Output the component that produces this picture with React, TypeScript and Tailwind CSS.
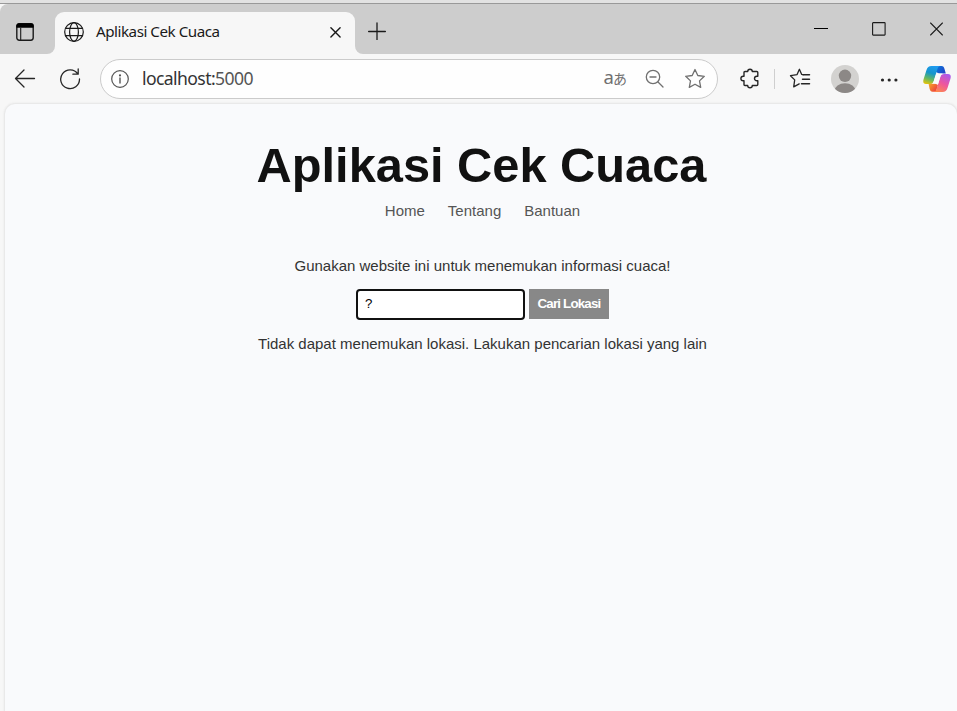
import React from "react";

const stroke = {
  fill: "none",
  stroke: "currentColor",
  strokeLinecap: "round" as const,
  strokeLinejoin: "round" as const,
};

function TitleBar() {
  return (
    <div className="flex h-[50px] rounded-tl-lg bg-[#cdcdcd] font-['Noto_Sans',sans-serif] text-[#1a1a1a]">
      <div className="flex w-[55px] bg-[#f7f7f7]">
        <div className="flex w-full items-center rounded-tl-lg rounded-br-lg bg-[#cdcdcd] pt-1.5 pl-4">
          <svg width="18" height="18" viewBox="0 0 18 18" {...stroke} strokeWidth="1.4">
            <rect x="0.8" y="0.8" width="16.4" height="16.4" rx="2.4" />
            <path d="M1 4V3.2Q1 1 3.2 1H14.8Q17 1 17 3.2V4Z" fill="#000" stroke="#000" />
            <path d="M4.7 5v12" strokeWidth="1.1" />
          </svg>
        </div>
      </div>
      <div className="mt-2 flex h-[42px] w-[300px] items-center rounded-t-[9px] bg-[#f7f7f7] pr-3 pb-[2px] pl-[9px]">
        <svg width="20" height="20" viewBox="0 0 20 20" {...stroke} strokeWidth="1.2">
          <circle cx="10" cy="10" r="9.3" />
          <ellipse cx="10" cy="10" rx="4.4" ry="9.3" />
          <path d="M1.7 6.3h16.6M1.7 13.7h16.6" />
        </svg>
        <span className="ml-3 flex-1 pb-[2px] text-[15.200px] leading-5 tracking-[-0.480px] whitespace-nowrap">Aplikasi Cek Cuaca</span>
        <svg width="15" height="14" viewBox="0 0 15 14" {...stroke} strokeWidth="1.4">
          <path d="M2.9 2.7l9.2 9.2M12.1 2.7L2.9 11.9" />
        </svg>
      </div>
      <div className="flex flex-1 bg-[#f7f7f7]">
        <div className="flex flex-1 items-start rounded-bl-lg bg-[#cdcdcd] pt-[18px] pl-[13px]">
          <svg width="18" height="18" viewBox="0 0 18 18" {...stroke} strokeWidth="1.3">
            <path d="M0.6 9.5h16.8M9 1v17" />
          </svg>
          <div className="mr-3.5 ml-auto flex">
            <svg width="14" height="16" viewBox="0 0 14 16" className="mr-11 text-black" fill="none" stroke="currentColor">
              <path d="M0 6.5h14" />
            </svg>
            <svg width="14" height="14" viewBox="0 0 14 14" className="mr-11" fill="none" stroke="currentColor" strokeWidth="1.1">
              <rect x="0.6" y="0.6" width="12.5" height="12.5" rx="0.6" />
            </svg>
            <svg width="13" height="14" viewBox="0 0 13 14" fill="none" stroke="currentColor" strokeWidth="1.1">
              <path d="M0.3 0.7l12.4 12.6M12.7 0.7L0.3 13.3" />
            </svg>
          </div>
        </div>
      </div>
    </div>
  );
}

function AddressBar() {
  return (
    <div className="flex h-10 w-[618px] items-center rounded-full border border-[#cbcbcb] bg-[#fefefe] pr-[11px] pl-2.5 text-[#707070]">
      <svg width="18" height="18" viewBox="0 0 18 18" {...stroke} strokeWidth="1.2" className="text-[#555]">
        <circle cx="9" cy="9" r="8.3" />
        <path d="M9 8v5" strokeWidth="1.4" />
        <circle cx="9" cy="5.4" r="0.5" fill="currentColor" />
      </svg>
      <span className="ml-[13px] flex-1 pb-0.5 font-['Noto_Sans',sans-serif] text-[17.600px] leading-6 tracking-[-0.600px] text-[#333]">
        localhost:<span className="text-[#555]">5000</span>
      </span>
      <span className="mr-[18px] flex items-baseline pb-0.5 leading-5">
        <span className="font-['Noto_Sans',sans-serif] text-[18.500px]">a</span>
        <span className="-ml-px font-['Noto_Sans_CJK_JP',sans-serif] text-[14px]">あ</span>
      </span>
      <svg width="20" height="20" viewBox="0 0 20 20" {...stroke} strokeWidth="1.3" className="mr-[19px]">
        <circle cx="8" cy="8" r="6.700" />
        <path d="M13 13l5 5M5 8h6" />
      </svg>
      <svg width="22" height="21" viewBox="0 0 22 21" {...stroke} strokeWidth="1.3">
        <path d="M11 1.500l2.800 6 6.500.8-4.800 4.600 1.200 6.500-5.700-3.200-5.700 3.200 1.200-6.500-4.800-4.600 6.500-.8z" />
      </svg>
    </div>
  );
}

function CopilotLogo() {
  return (
    <svg width="28" height="28" viewBox="0 0 28 28">
      <defs>
        <linearGradient id="left" x1="11" y1="1" x2="5" y2="20" gradientUnits="userSpaceOnUse">
          <stop stopColor="#1f9bf0" />
          <stop offset=".38" stopColor="#1595cb" />
          <stop offset=".68" stopColor="#61b765" />
          <stop offset="1" stopColor="#f2c500" />
        </linearGradient>
        <linearGradient id="right" x1="23" y1="8" x2="13" y2="27" gradientUnits="userSpaceOnUse">
          <stop stopColor="#a958ee" />
          <stop offset=".5" stopColor="#ee559e" />
          <stop offset="1" stopColor="#ff8d47" />
        </linearGradient>
        <linearGradient id="fold" x1="13" y1="2" x2="21" y2="8" gradientUnits="userSpaceOnUse">
          <stop stopColor="#087bd8" />
          <stop offset="1" stopColor="#2144c9" />
        </linearGradient>
        <linearGradient id="base" x1="4" y1="18" x2="13" y2="25" gradientUnits="userSpaceOnUse">
          <stop stopColor="#f8bc1d" />
          <stop offset="1" stopColor="#ee453e" />
        </linearGradient>
      </defs>
      <path d="M11 1h7.500c1.800 0 2.500 1.200 3 3l1.300 4.500H16L13 7z" fill="url(#fold)" />
      <path d="M5.500 18.500H12l3 1.500-2 6.700H9.500c-1.700 0-2.300-1.200-2.900-3z" fill="url(#base)" />
      <path d="M8.500 1H17c-1.600.3-2.200 1.800-2.700 3.500L10.700 16c-.8 2.300-1.800 3-4 3H3c-2.500 0-3.200-1.800-2.500-4.500L3.500 5c.8-2.500 2.300-4 5-4z" fill="url(#left)" />
      <path d="M19.500 27H11c1.600-.3 2.200-1.800 2.700-3.500L17.300 12c.8-2.300 1.800-3 4-3H25c2.500 0 3.200 1.800 2.500 4.500L24.500 23c-.8 2.500-2.300 4-5 4z" fill="url(#right)" />
      <path d="M14.700 8.600H20c-1.600.5-2.200 1.400-2.700 3.100l-2.100 7H8.800c1.200-.4 1.600-1.300 2.100-2.700l1.800-5.600c.4-1.200.8-1.600 2-1.800z" fill="#fafafa" />
    </svg>
  );
}

function Toolbar() {
  return (
    <div className="flex h-[49px] items-center pl-3.5 text-[#262626]">
      <svg width="22" height="20" viewBox="0 0 22 20" {...stroke} strokeWidth="1.3">
        <path d="M20.500 9.500H1.500M10 1L1.500 9.500l8.500 8.500" />
      </svg>
      <svg width="22" height="22" viewBox="0 0 22 22" {...stroke} strokeWidth="1.3" className="mr-[19px] ml-[23px]">
        <path d="M18.900 6A9.400 9.400 0 1 0 20.500 11M19.200 1V6.200h-5.300" />
      </svg>
      <AddressBar />
      <svg width="20" height="21" viewBox="0 0 20 21" {...stroke} strokeWidth="1.4" className="ml-[22px]">
        <path d="M5 3.500h2.700a2.300 2.300 0 0 1 4.600 0h4.500q1 0 1 1v3.700h-1a2.300 2.300 0 0 0 0 4.600h1v3.700q0 1-1 1h-4.500a2.300 2.300 0 0 1-4.600 0H5q-1 0-1-1v-3.700h-.8a2.300 2.300 0 0 1 0-4.600H4V4.500q0-1 1-1z" />
      </svg>
      <div className="ml-3.5 h-5 w-px bg-[#cfcfcf]" />
      <svg width="22" height="21" viewBox="0 0 22 21" {...stroke} strokeWidth="1.300" className="ml-3.5">
        <path d="M14.200 6.700L12.700 6.400 10.400 1.300 8.100 6.600 1.500 7.700l4.200 4.200-1 7 5.500-3" />
        <path d="M14 6.700h6.500M13.500 11.200h7M12.500 15.700h8" strokeWidth="1.500" />
      </svg>
      <svg width="28" height="28" viewBox="0 0 28 28" className="ml-5">
        <defs><clipPath id="avatar"><circle cx="14" cy="14" r="14" /></clipPath></defs>
        <g clipPath="url(#avatar)">
          <rect width="28" height="28" fill="#d3d2d0" />
          <circle cx="14" cy="10.800" r="6.200" fill="#8c8886" />
          <ellipse cx="14" cy="26" rx="10.500" ry="7.800" fill="#8c8886" />
        </g>
      </svg>
      <svg width="18" height="4" viewBox="0 0 18 4" className="mt-0.5 ml-[21px]" fill="currentColor">
        <circle cx="2.500" cy="2" r="1.600" /><circle cx="9.200" cy="2" r="1.600" /><circle cx="15.900" cy="2" r="1.600" />
      </svg>
      <div className="ml-[25px]"><CopilotLogo /></div>
    </div>
  );
}

function WeatherPage() {
  return (
    <main className="ml-[5px] flex flex-1 flex-col items-center rounded-t-[10px] bg-[#f9fafc] pl-[3px] font-['Liberation_Sans',Arial,sans-serif] text-[15px] leading-5 text-[#333] shadow-[0_0_2px_1px_#e4e4e4]">
      <h1 className="mt-[33px] mr-0.5 text-[48.750px] leading-[56px] font-bold text-[#111]">Aplikasi Cek Cuaca</h1>
      <nav className="mt-2 flex gap-[23px] text-[#555]">
        <a>Home</a>
        <a>Tentang</a>
        <a>Bantuan</a>
      </nav>
      <p className="mt-[35px]">Gunakan website ini untuk menemukan informasi cuaca!</p>
      <form className="mt-[13px] flex h-[31px] gap-1" onSubmit={(e) => e.preventDefault()}>
        <input className="h-[31px] w-[169px] rounded-[4px] border-2 border-[#111] bg-white px-[7px] pb-0.5 text-[13.300px] text-black outline-none" defaultValue="?" />
        <button className="h-[30px] w-20 bg-[#888] pb-px text-[13.300px] font-bold tracking-[-0.800px] text-white">Cari Lokasi</button>
      </form>
      <p className="mt-3.5">Tidak dapat menemukan lokasi. Lakukan pencarian lokasi yang lain</p>
    </main>
  );
}

export default function App() {
  return (
    <div className="flex h-screen flex-col overflow-hidden bg-[#f7f7f7]">
      <div className="h-1 shrink-0 border-b border-[#999] bg-[#e2e2e2]" />
      <TitleBar />
      <Toolbar />
      <div className="h-px shrink-0" />
      <WeatherPage />
    </div>
  );
}
